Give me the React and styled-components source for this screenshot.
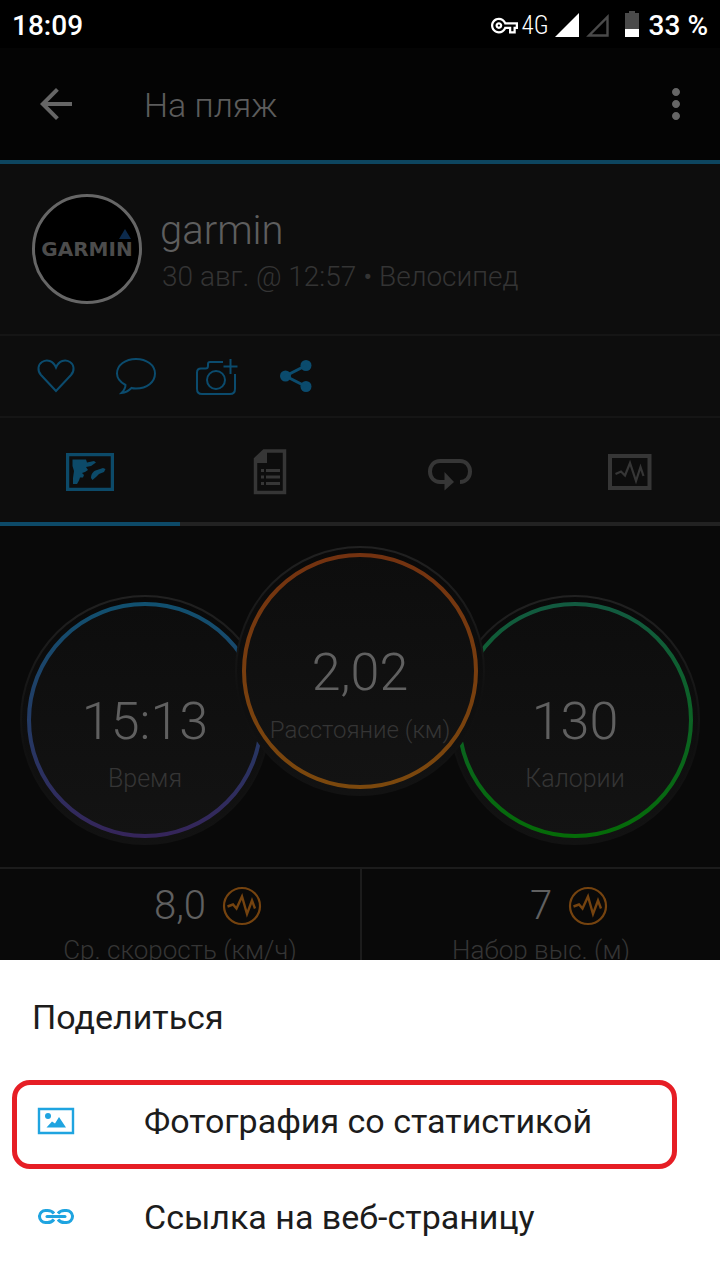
import React, { useState } from 'react';
import styled, { createGlobalStyle } from 'styled-components';
import { MdArrowBack, MdMoreVert, MdOutlineVpnKey } from 'react-icons/md';

const GlobalStyle = createGlobalStyle`
  * {
    box-sizing: border-box;
  }
  body {
    margin: 0;
    background: #090909;
    font-family: Roboto, 'Noto Sans', sans-serif;
  }
  button {
    font: inherit;
    color: inherit;
    background: transparent;
    border: none;
    padding: 0;
    cursor: pointer;
  }
`;

const Page = styled.div`
  min-height: 100vh;
  overflow: hidden;
`;

const StatusBar = styled.div`
  display: flex;
  align-items: center;
  height: 48px;
  padding: 2px 12px 0;
  background: #000;
  color: #fff;
  font-size: 28px;
  font-weight: 500;
`;

const StatusIcons = styled.div`
  display: flex;
  align-items: center;
  gap: 6px;
  margin-left: auto;
`;

const Network = styled.span`
  margin-left: -2px;
  font-family: 'Roboto Condensed', 'Liberation Sans Narrow', Roboto, sans-serif;
  font-size: 25px;
  font-weight: 300;
`;

const BatteryIcon = styled.svg`
  width: 16px;
  height: 26px;
  margin: 0 3px 2px 9px;
`;

const AppBar = styled.header`
  display: flex;
  align-items: center;
  height: 116px;
  padding: 0 20px 0 32px;
  background: #040404;
  border-bottom: 4px solid #0d455f;
  color: #666;
`;

const BarButton = styled.button`
  display: flex;
  width: 48px;
  height: 48px;
`;

const AppTitle = styled.h1`
  flex: 1;
  margin: 0;
  padding: 2px 0 0 64px;
  font-size: 34px;
  font-weight: 300;
  line-height: 40px;
  color: #5c5c5c;
`;

const Profile = styled.section`
  display: flex;
  align-items: center;
  gap: 18px;
  height: 172px;
  padding: 0 32px;
  background: #0d0d0d;
  border-bottom: 2px solid #151515;
`;

const Avatar = styled.div`
  flex: none;
  display: flex;
  width: 110px;
  height: 110px;
  border: 3px solid #666;
  border-radius: 50%;
  background: #000;
  overflow: hidden;
`;

const AvatarLogo = styled.svg`
  width: 104px;
  height: 104px;
  font-family: 'DejaVu Sans', sans-serif;
  font-size: 20px;
  font-weight: 700;
`;

const ProfileText = styled.div`
  padding-top: 6px;
`;

const UserName = styled.div`
  font-size: 40px;
  font-weight: 300;
  line-height: 50px;
  color: #5e5e5e;
`;

const ActivityInfo = styled.div`
  padding-left: 2px;
  font-size: 28px;
  font-weight: 300;
  line-height: 42px;
  color: #343434;
`;

const Actions = styled.div`
  display: flex;
  height: 82px;
  padding: 0 16px;
  background: #0d0d0d;
  border-bottom: 2px solid #151515;
  color: #0b4b6d;
`;

const ActionButton = styled.button`
  display: flex;
  align-items: center;
  justify-content: center;
  width: 80px;
  height: 80px;
`;

const Tabs = styled.nav`
  display: grid;
  grid-template-columns: repeat(4, 1fr);
  background: #0d0d0d;
`;

const TabButton = styled.button`
  display: flex;
  align-items: center;
  justify-content: center;
  height: 108px;
  padding-top: 4px;
  border-bottom: 4px solid ${(props) => (props.$active ? '#0d4a68' : '#222')};
  color: ${(props) => (props.$active ? '#0c4a69' : '#363636')};
`;

const Gauges = styled.section`
  display: flex;
  justify-content: center;
  align-items: flex-end;
  padding: 20px 0 22px;
`;

const Gauge = styled.div`
  position: relative;
  z-index: ${(props) => (props.$main ? 1 : 0)};
  display: grid;
  justify-items: center;
  width: 250px;
  height: 250px;
  margin: ${(props) => (props.$main ? '0 -35px 49px' : '0')};
`;

const Ring = styled.svg`
  grid-area: 1 / 1;
  width: 250px;
  height: 250px;
`;

const GaugeText = styled.div`
  grid-area: 1 / 1;
  padding-top: 95px;
  text-align: center;
  white-space: nowrap;
`;

const GaugeValue = styled.div`
  font-size: 52px;
  font-weight: 300;
  line-height: 64px;
  color: #606060;
`;

const Caption = styled.div`
  font-size: 26px;
  font-weight: 300;
  line-height: 32px;
  color: #353535;
`;

const GaugeCaption = styled(Caption)`
  margin-top: 9px;
  font-size: ${(props) => (props.$main ? '24px' : '25px')};
`;

const Metrics = styled.section`
  display: grid;
  grid-template-columns: 1fr 1fr;
  border-top: 2px solid #1c1c1c;
`;

const Metric = styled.div`
  padding: 12px 0 40px;
  text-align: center;

  & + & {
    border-left: 2px solid #1c1c1c;
  }
`;

const MetricRow = styled.div`
  display: grid;
  grid-template-columns: 1fr auto 1fr;
  align-items: center;
  column-gap: 16px;
  margin-bottom: 3px;
`;

const MetricValue = styled.div`
  grid-column: 2;
  font-size: 40px;
  font-weight: 300;
  line-height: 50px;
  color: #606060;
`;

const Sheet = styled.div`
  position: fixed;
  z-index: 2;
  left: 0;
  right: 0;
  bottom: 0;
  padding-bottom: 16px;
  background: #fff;
  color: #1c1c1c;
`;

const SheetTitle = styled.h2`
  margin: 0;
  padding: 2px 32px 0;
  font-size: 34px;
  font-weight: 400;
  line-height: 110px;
`;

const SheetItem = styled.button`
  position: relative;
  display: flex;
  align-items: center;
  gap: 64px;
  width: 100%;
  height: 96px;
  padding: 1px 32px 0;
  font-size: 34px;
  line-height: 40px;
  text-align: left;

  svg {
    flex: none;
    color: #1fa4e0;
  }
`;

const Highlight = styled.span`
  position: absolute;
  top: 8px;
  right: 43px;
  bottom: -1px;
  left: 12px;
  border: 5px solid #e61e25;
  border-radius: 18px;
  pointer-events: none;
`;

const Signal = ({ full }) => (
  <svg width="24" height="24" viewBox="0 0 24 24">
    {full ? (
      <path d="M24 0v24H0z" fill="#fff" />
    ) : (
      <path d="M22.500 4v18.500H4z" fill="none" stroke="#4a4a4a" strokeWidth="2.400" />
    )}
  </svg>
);

const Battery = () => (
  <BatteryIcon viewBox="0 0 16 26">
    <path d="M5 0h6v2h4v24H1V2h4z" fill="#4a4a4a" />
    <path d="M1 18h14v8H1z" fill="#fff" />
  </BatteryIcon>
);

const HeartIcon = () => (
  <svg width="40" height="36" viewBox="0 0 40 36" fill="none" stroke="currentColor" strokeWidth="2">
    <path d="M20 33 5 17C1 12.500 2 6.500 6 4c5-3 11-1.500 14 5.500C23 2.500 29 1 34 4c4 2.500 5 8.500 1 13z" />
  </svg>
);

const CommentIcon = () => (
  <svg width="42" height="40" viewBox="0 0 42 40" fill="none" stroke="currentColor" strokeWidth="2">
    <path d="M10.500 29C5 26 2 22 2 17.500 2 9 10.500 3 21 3s19 6 19 14.500S32 32.500 21 32.500c-1.500 0-3 0-4.500-.5-2.500 2.500-5.500 4.500-10 5 2.500-2.500 4-5 4-8z" />
  </svg>
);

const CameraIcon = () => (
  <svg width="44" height="40" viewBox="0 0 44 40" fill="none" stroke="currentColor" strokeWidth="2">
    <path d="M29 6H16c-1.500 0-2 1-2 2v2c0 1.500-1 2.500-2.500 2.500H7C4.500 12.500 3 14 3 16.500V33c0 3 2 5 5 5h28c3 0 5-2 5-5V18" />
    <circle cx="22" cy="24" r="9" />
    <path d="M36.500 3v15M29.500 10.500h14" />
  </svg>
);

const ShareIcon = () => (
  <svg width="34" height="34" viewBox="0 0 34 34" fill="currentColor">
    <circle cx="6.500" cy="17" r="5.500" />
    <circle cx="27" cy="6.500" r="5.500" />
    <circle cx="27" cy="27.500" r="5.500" />
    <path d="M27 6.500 6.500 17 27 27.500" fill="none" stroke="currentColor" strokeWidth="3" />
  </svg>
);

const MapIcon = () => (
  <svg width="48" height="38" viewBox="0 0 48 38" fill="currentColor">
    <path d="M1.500 1.500h45v35h-45z" fill="none" stroke="currentColor" strokeWidth="3.500" />
    <path d="M6.500 6.500H20l1 3 7-1.500 2 1.500-5 3.500-5 1 2 3-3 2-3 1 2 2-1 2.500h-3l-1 3-2 3.500H7v-6l1-7-1.500-5z" />
    <path d="M25 25c0-4 2-7 6-8l6-2 2.500 1-1.500 3-5 2-3 3-3.500 3z" />
  </svg>
);

const DetailsIcon = () => (
  <svg width="34" height="46" viewBox="0 0 34 46" fill="currentColor">
    <path d="M11 2h20.500v41.500h-29V10z" fill="none" stroke="currentColor" strokeWidth="3.500" />
    <path d="M11 1h3v13H2v-4z" />
    <path d="M8 20h3v3H8zm5 0h14v3H13zM8 26.500h3v3H8zm5 0h14v3H13zM8 33h3v3H8zm5 0h14v3H13z" />
  </svg>
);

const LapsIcon = () => (
  <svg width="46" height="40" viewBox="0 -6 46 40" fill="none" stroke="currentColor" strokeWidth="4">
    <path d="M19 24h-6C7 24 3 19.500 3 13.500S7 3 13 3h20c6 0 10 4.500 10 10.500S39 24 33 24" />
    <path d="M17.500 14 27 24l-9.500 8.500z" fill="currentColor" stroke="none" />
  </svg>
);

const ChartIcon = () => (
  <svg width="44" height="36" viewBox="0 0 44 36" fill="none" stroke="currentColor">
    <path d="M2 2h39.500v32H2z" strokeWidth="4" />
    <path d="m7.500 20 5.500-2.500 4 4L22 9l6 18 4.500-14 3 9" strokeWidth="2.200" />
  </svg>
);

const PulseIcon = () => (
  <svg width="40" height="40" viewBox="0 0 40 40" fill="none" stroke="#75430f">
    <circle cx="20" cy="20" r="18" strokeWidth="2.200" />
    <path d="m5.500 20.500 5.500-2 3.500 4L20 10.500 25 28l5-13.500 3 8" strokeWidth="2.400" />
  </svg>
);

const PhotoIcon = () => (
  <svg width="48" height="32" viewBox="0 0 48 32" fill="currentColor">
    <path d="M7 4h34v24H7z" fill="none" stroke="currentColor" strokeWidth="2.400" />
    <circle cx="16" cy="11" r="3" />
    <path d="m14.500 22.500 5.500-6 3 2 4-6.500 7 10.500z" />
  </svg>
);

const LinkIcon = () => (
  <svg width="48" height="32" viewBox="0 0 48 32" fill="none" stroke="currentColor" strokeWidth="3">
    <path d="M22 12.500c-1.500-2-3.500-3-6.500-3h-2a6 6 0 0 0 0 12h2c3 0 5-1 6.500-3M26 12.500c1.500-2 3.500-3 6.500-3h2a6 6 0 0 1 0 12h-2c-3 0-5-1-6.500-3" />
    <path d="M15 15.500h18" strokeLinecap="round" />
  </svg>
);

const gauges = [
  { id: 'time', value: '15:13', label: 'Время', from: '#11506f', to: '#35255a' },
  { id: 'distance', value: '2,02', label: 'Расстояние (км)', from: '#733210', to: '#7b480d', main: true },
  { id: 'calories', value: '130', label: 'Калории', from: '#125a40', to: '#056b08' }
];

const metrics = [
  { value: '8,0', label: 'Ср. скорость (км/ч)' },
  { value: '7', label: 'Набор выс. (м)' }
];

const actions = [
  { label: 'Нравится', Icon: HeartIcon },
  { label: 'Комментировать', Icon: CommentIcon },
  { label: 'Добавить фото', Icon: CameraIcon },
  { label: 'Поделиться', Icon: ShareIcon }
];

const tabs = [
  { label: 'Карта', Icon: MapIcon },
  { label: 'Сведения', Icon: DetailsIcon },
  { label: 'Круги', Icon: LapsIcon },
  { label: 'Графики', Icon: ChartIcon }
];

function StatGauge({ id, value, label, from, to, main }) {
  return (
    <Gauge $main={main}>
      <Ring viewBox="0 0 250 250">
        <defs>
          <linearGradient id={`${id}-ring`} x1="0" y1="0" x2="0" y2="1">
            <stop offset="0" stopColor={from} />
            <stop offset="1" stopColor={to} />
          </linearGradient>
          <linearGradient id={`${id}-rim`} x1="0" y1="0" x2="0" y2="1">
            <stop offset="0" stopColor="#212121" />
            <stop offset="0.6" stopColor="#101010" />
            <stop offset="1" stopColor="#121212" />
          </linearGradient>
          <linearGradient id={`${id}-bezel`} x1="0" y1="0" x2="0" y2="1">
            <stop offset="0" stopColor="#090909" />
            <stop offset="1" stopColor="#121212" />
          </linearGradient>
          <linearGradient id={`${id}-face`} x1="0" y1="0" x2="0" y2="1">
            <stop offset="0" stopColor="#0d0d0d" />
            <stop offset="1" stopColor="#131313" />
          </linearGradient>
        </defs>
        <circle
          cx="125"
          cy="125"
          r="124"
          fill={`url(#${id}-bezel)`}
          stroke={`url(#${id}-rim)`}
          strokeWidth="2"
        />
        <circle
          cx="125"
          cy="125"
          r="116"
          fill={`url(#${id}-face)`}
          stroke={`url(#${id}-ring)`}
          strokeWidth="4"
        />
      </Ring>
      <GaugeText>
        <GaugeValue>{value}</GaugeValue>
        <GaugeCaption $main={main}>{label}</GaugeCaption>
      </GaugeText>
    </Gauge>
  );
}

export default function App() {
  const [activeTab, setActiveTab] = useState(0);

  return (
    <Page>
      <GlobalStyle />
      <StatusBar>
        <span>18:09</span>
        <StatusIcons>
          <MdOutlineVpnKey size={27} />
          <Network>4G</Network>
          <Signal full />
          <Signal />
          <Battery />
          <span>33 %</span>
        </StatusIcons>
      </StatusBar>
      <AppBar>
        <BarButton aria-label="Назад">
          <MdArrowBack size={48} />
        </BarButton>
        <AppTitle>На пляж</AppTitle>
        <BarButton aria-label="Меню">
          <MdMoreVert size={48} />
        </BarButton>
      </AppBar>
      <Profile>
        <Avatar>
          <AvatarLogo viewBox="0 0 104 104">
            <text x="52" y="59" textAnchor="middle" fill="#4c4c4c">
              GARMIN
            </text>
            <path d="m90 32 6 10H84z" fill="#0c2a4c" />
          </AvatarLogo>
        </Avatar>
        <ProfileText>
          <UserName>garmin</UserName>
          <ActivityInfo>30 авг. @ 12:57 • Велосипед</ActivityInfo>
        </ProfileText>
      </Profile>
      <Actions>
        {actions.map(({ label, Icon }) => (
          <ActionButton key={label} aria-label={label}>
            <Icon />
          </ActionButton>
        ))}
      </Actions>
      <Tabs>
        {tabs.map(({ label, Icon }, i) => (
          <TabButton
            key={label}
            aria-label={label}
            $active={i === activeTab}
            onClick={() => setActiveTab(i)}
          >
            <Icon />
          </TabButton>
        ))}
      </Tabs>
      <Gauges>
        {gauges.map((gauge) => (
          <StatGauge key={gauge.id} {...gauge} />
        ))}
      </Gauges>
      <Metrics>
        {metrics.map(({ value, label }) => (
          <Metric key={label}>
            <MetricRow>
              <MetricValue>{value}</MetricValue>
              <PulseIcon />
            </MetricRow>
            <Caption>{label}</Caption>
          </Metric>
        ))}
      </Metrics>
      <Sheet role="dialog" aria-labelledby="share-title">
        <SheetTitle id="share-title">Поделиться</SheetTitle>
        <SheetItem>
          <PhotoIcon />
          Фотография со статистикой
          <Highlight />
        </SheetItem>
        <SheetItem>
          <LinkIcon />
          Ссылка на веб-страницу
        </SheetItem>
      </Sheet>
    </Page>
  );
}
